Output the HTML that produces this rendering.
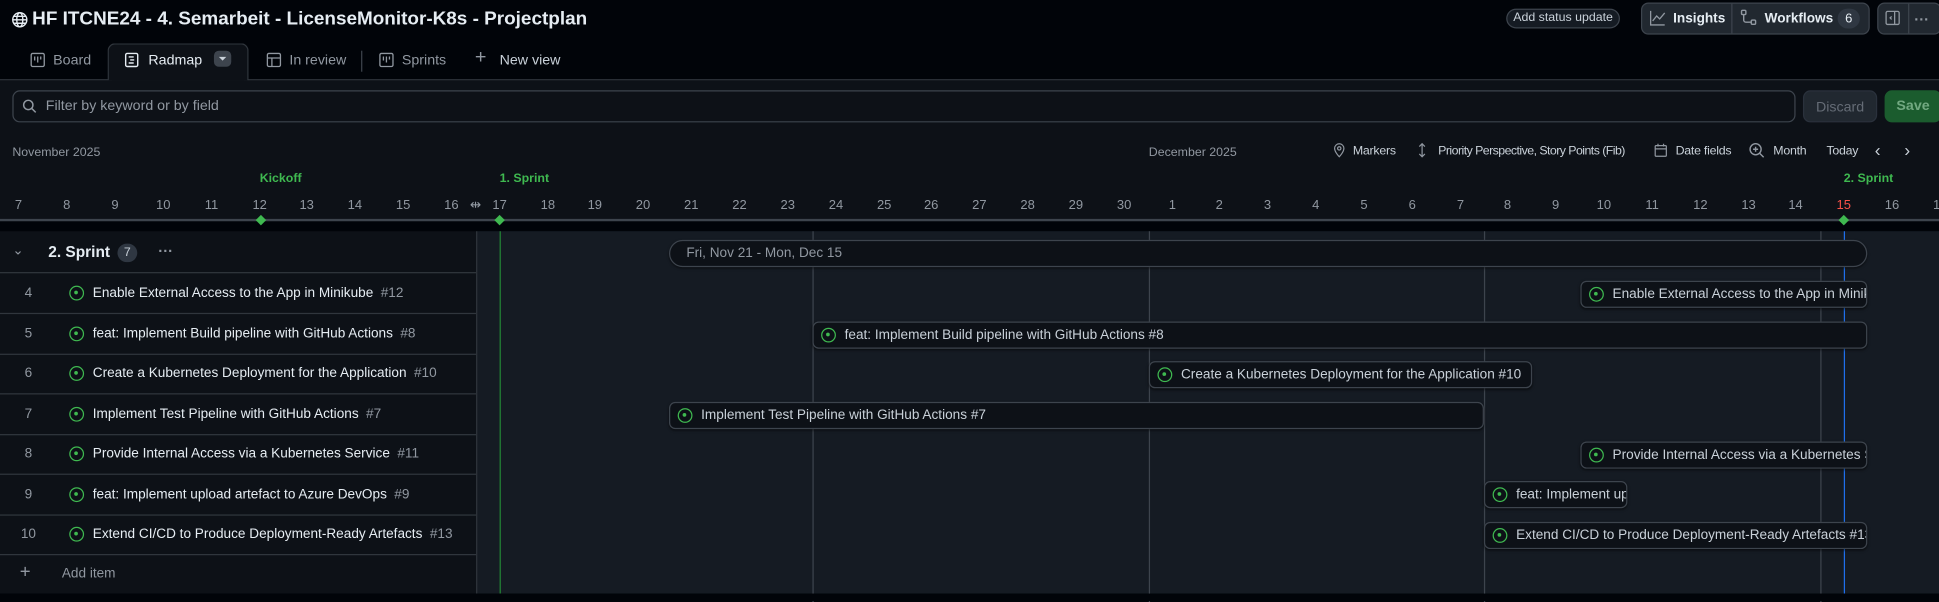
<!DOCTYPE html>
<html><head><meta charset="utf-8"><style>
*{box-sizing:border-box;margin:0;padding:0}
html,body{width:1939px;height:600px;overflow:hidden;background:#010409}
#w{position:absolute;left:0;top:0;width:1568px;height:485.2px;transform:scale(1.23661);transform-origin:0 0;font-family:"Liberation Sans",sans-serif;color:#e6edf3;font-size:11px;background:#010409}
.a{position:absolute;white-space:nowrap}
.mut{color:#9198a1}
.day{position:absolute;top:160px;width:30px;margin-left:-15px;text-align:center;color:#9198a1;font-size:10.5px}
.row{position:absolute;left:0;width:385px;height:32.5px;border-bottom:1px solid #30363d}
.row .n{position:absolute;left:0;width:46px;text-align:center;top:10px;color:#9198a1}
.row .t{position:absolute;left:75px;top:10px}
.row .t i{font-style:normal;color:#9198a1;margin-left:6px}
.ic{position:absolute;width:12px;height:12px;border:1.5px solid #3fb950;border-radius:50%}
.ic:after{content:"";position:absolute;left:3px;top:3px;width:3px;height:3px;background:#3fb950;border-radius:50%}
.bar{position:absolute;height:22px;background:#0d1117;border:1px solid #3d444d;border-radius:5px;overflow:hidden;color:#c9d1d9;box-shadow:0 1px 2px #0008}
.bar .ic{left:6px;top:4px}
.bar span{position:absolute;left:25px;top:4px;white-space:nowrap}
.vl{position:absolute;top:180px;width:1px;height:300px;background:#3d444d}
.btn{position:absolute;border:1px solid #3d444d;border-radius:6px;background:#212830}
.tb{font-size:10px;color:#c9d1d9;letter-spacing:-0.2px}
</style></head><body><div id="w">
<svg class="a" style="left:9px;top:9px" width="14" height="14" viewBox="0 0 16 16" fill="none" stroke="#e6edf3" stroke-width="1.3"><circle cx="8" cy="8" r="6.5"/><ellipse cx="8" cy="8" rx="2.8" ry="6.5"/><path d="M1.5 8h13M2.5 4.8h11M2.5 11.2h11"/></svg>
<div class="a" style="left:26px;top:7px;font-size:15.3px;font-weight:bold">HF ITCNE24 - 4. Semarbeit - LicenseMonitor-K8s - Projectplan</div>
<div class="a" style="left:1218px;top:7px;width:92px;height:16px;border:1px solid #3d444d;border-radius:9px;background:#151b23;font-size:10px;text-align:center;line-height:14px;color:#c9d1d9">Add status update</div>
<div class="btn" style="left:1327px;top:2px;width:185px;height:26px"></div>
<div class="a" style="left:1400px;top:3px;width:1px;height:24px;background:#3d444d"></div>
<svg class="a" style="left:1334px;top:8px" width="13" height="13" viewBox="0 0 16 16" fill="none" stroke="#9198a1" stroke-width="1.3"><path d="M1 1v14h14M3 11l4-5 3 3 5-6"/></svg>
<div class="a" style="left:1353px;top:9px;font-weight:bold;font-size:11px">Insights</div>
<svg class="a" style="left:1407px;top:7px" width="14" height="14" viewBox="0 0 16 16" fill="none" stroke="#9198a1" stroke-width="1.3"><rect x="1.5" y="1.5" width="4" height="4" rx="1"/><rect x="10.5" y="10.5" width="4" height="4" rx="1"/><path d="M3.5 5.5v5a2 2 0 0 0 2 2h5"/></svg>
<div class="a" style="left:1427px;top:9px;font-weight:bold;font-size:11px">Workflows</div>
<div class="a" style="left:1486px;top:7px;width:18px;height:16px;border-radius:8px;background:#2f3742;text-align:center;line-height:16px;font-size:10.5px">6</div>
<div class="btn" style="left:1518px;top:2px;width:52px;height:26px"></div>
<div class="a" style="left:1543px;top:3px;width:1px;height:24px;background:#3d444d"></div>
<svg class="a" style="left:1524px;top:8px" width="13" height="13" viewBox="0 0 16 16" fill="none" stroke="#9198a1" stroke-width="1.3"><rect x="1.5" y="1.5" width="13" height="13" rx="1.5"/><path d="M10 1.5v13M7 6.5l-1.5 1.5 1.5 1.5"/></svg>
<div class="a mut" style="left:1548px;top:9px;font-size:12px;font-weight:bold">···</div>
<div class="a" style="left:0;top:64px;width:1568px;height:1px;background:#30363d"></div>
<div class="a" style="left:87px;top:35px;width:114px;height:30px;border:1px solid #30363d;border-bottom:none;border-radius:6px 6px 0 0;background:#0d1117"></div>
<svg class="a" style="left:24px;top:42px" width="13" height="13" viewBox="0 0 16 16" fill="none" stroke="#9198a1" stroke-width="1.3"><rect x="1.5" y="1.5" width="13" height="13" rx="1.5"/><path d="M5 4.5v4M8 4.5v6M11 4.5v3"/></svg>
<div class="a mut" style="left:43px;top:43px;font-size:11.5px">Board</div>
<svg class="a" style="left:100px;top:42px" width="13" height="13" viewBox="0 0 16 16" fill="none" stroke="#e6edf3" stroke-width="1.4"><rect x="2" y="1.5" width="12" height="13" rx="1.5"/><path d="M5 5h5M6.5 8h4M5 11h5"/></svg>
<div class="a" style="left:120px;top:43px;font-size:11.5px">Radmap</div>
<div class="a" style="left:173px;top:41px;width:14px;height:13px;border-radius:4px;background:#3d444d"></div>
<div class="a" style="left:177px;top:46px;border:3px solid transparent;border-top:3px solid #c9d1d9"></div>
<svg class="a" style="left:215px;top:42px" width="13" height="13" viewBox="0 0 16 16" fill="none" stroke="#9198a1" stroke-width="1.3"><rect x="1.5" y="1.5" width="13" height="13" rx="1.5"/><path d="M1.5 6h13M6 6v8.5"/></svg>
<div class="a mut" style="left:234px;top:43px;font-size:11.5px">In review</div>
<div class="a" style="left:292px;top:41px;width:1px;height:17px;background:#3d444d"></div>
<svg class="a" style="left:306px;top:42px" width="13" height="13" viewBox="0 0 16 16" fill="none" stroke="#9198a1" stroke-width="1.3"><rect x="1.5" y="1.5" width="13" height="13" rx="1.5"/><path d="M5 4.5v4M8 4.5v6M11 4.5v3"/></svg>
<div class="a mut" style="left:325px;top:43px;font-size:11.5px">Sprints</div>
<div class="a mut" style="left:384px;top:38px;font-size:16px">+</div>
<div class="a" style="left:404px;top:43px;font-size:11.5px;color:#c9d1d9">New view</div>
<div class="a" style="left:0;top:65px;width:1568px;height:415px;background:#0d1117"></div>
<div class="a" style="left:10px;top:73px;width:1442px;height:26px;border:1px solid #3d444d;border-radius:6px;background:#0d1117"></div>
<svg class="a" style="left:18px;top:80px" width="12" height="12" viewBox="0 0 16 16" fill="none" stroke="#9198a1" stroke-width="1.6"><circle cx="6.5" cy="6.5" r="5"/><path d="M10.5 10.5l4 4"/></svg>
<div class="a mut" style="left:37px;top:80px;font-size:11.5px">Filter by keyword or by field</div>
<div class="a" style="left:1458px;top:73px;width:60px;height:26px;border-radius:6px;background:#212830;color:#656c76;text-align:center;line-height:26px;font-size:11.5px;border:1px solid #2a313c">Discard</div>
<div class="a" style="left:1524px;top:73px;width:46px;height:26px;border-radius:6px;background:#1f6f34;color:#8ccf9c;text-align:center;line-height:26px;font-size:11.5px;font-weight:bold;opacity:.8">Save</div>
<div class="a mut" style="left:10px;top:118px;font-size:10px">November 2025</div>
<div class="a mut" style="left:929px;top:118px;font-size:10px">December 2025</div>
<svg class="a" style="left:1077px;top:115px" width="12" height="13" viewBox="0 0 16 16" fill="none" stroke="#9198a1" stroke-width="1.3"><path d="M8 15s5-5 5-9a5 5 0 0 0-10 0c0 4 5 9 5 9z"/><circle cx="8" cy="6" r="1.8"/></svg>
<div class="a tb" style="left:1094px;top:117px">Markers</div>
<svg class="a" style="left:1144px;top:115px" width="12" height="13" viewBox="0 0 16 16" fill="none" stroke="#9198a1" stroke-width="1.3"><path d="M8 1v14M5 4l3-3 3 3M5 12l3 3 3-3"/></svg>
<div class="a tb" style="left:1163px;top:117px;letter-spacing:-0.45px">Priority Perspective, Story Points (Fib)</div>
<svg class="a" style="left:1337px;top:115px" width="12" height="13" viewBox="0 0 16 16" fill="none" stroke="#9198a1" stroke-width="1.3"><rect x="2" y="3" width="12" height="11.5" rx="1"/><path d="M2 6.5h12M5 1v3M11 1v3"/></svg>
<div class="a tb" style="left:1355px;top:117px">Date fields</div>
<svg class="a" style="left:1414px;top:115px" width="13" height="13" viewBox="0 0 16 16" fill="none" stroke="#9198a1" stroke-width="1.4"><circle cx="7" cy="7" r="5.5"/><path d="M11 11l4 4M7 4.5v5M4.5 7h5"/></svg>
<div class="a tb" style="left:1434px;top:117px">Month</div>
<div class="a tb" style="left:1477px;top:117px">Today</div>
<div class="a" style="left:1516px;top:113px;font-size:14px;color:#c9d1d9">‹</div>
<div class="a" style="left:1540px;top:113px;font-size:14px;color:#c9d1d9">›</div>
<div class="a" style="left:210px;top:139px;font-size:10px;color:#3fb950;font-weight:bold">Kickoff</div>
<div class="a" style="left:404px;top:139px;font-size:10px;color:#3fb950;font-weight:bold">1. Sprint</div>
<div class="a" style="left:1491px;top:139px;font-size:10px;color:#3fb950;font-weight:bold">2. Sprint</div>
<div class="day" style="left:15px">7</div><div class="day" style="left:54px">8</div><div class="day" style="left:93px">9</div><div class="day" style="left:132px">10</div><div class="day" style="left:171px">11</div><div class="day" style="left:210px">12</div><div class="day" style="left:248px">13</div><div class="day" style="left:287px">14</div><div class="day" style="left:326px">15</div><div class="day" style="left:365px">16</div><div class="day" style="left:404px">17</div><div class="day" style="left:443px">18</div><div class="day" style="left:481px">19</div><div class="day" style="left:520px">20</div><div class="day" style="left:559px">21</div><div class="day" style="left:598px">22</div><div class="day" style="left:637px">23</div><div class="day" style="left:676px">24</div><div class="day" style="left:715px">25</div><div class="day" style="left:753px">26</div><div class="day" style="left:792px">27</div><div class="day" style="left:831px">28</div><div class="day" style="left:870px">29</div><div class="day" style="left:909px">30</div><div class="day" style="left:948px">1</div><div class="day" style="left:986px">2</div><div class="day" style="left:1025px">3</div><div class="day" style="left:1064px">4</div><div class="day" style="left:1103px">5</div><div class="day" style="left:1142px">6</div><div class="day" style="left:1181px">7</div><div class="day" style="left:1219px">8</div><div class="day" style="left:1258px">9</div><div class="day" style="left:1297px">10</div><div class="day" style="left:1336px">11</div><div class="day" style="left:1375px">12</div><div class="day" style="left:1414px">13</div><div class="day" style="left:1452px">14</div><div class="day" style="left:1491px;color:#f85149">15</div><div class="day" style="left:1530px">16</div><div class="day" style="left:1569px">17</div>
<div class="a mut" style="left:380px;top:159px;font-size:11px">⇹</div>
<div class="a" style="left:0;top:177px;width:1568px;height:2px;background:#3d444d"></div>
<div class="a" style="left:0;top:179px;width:1568px;height:8px;background:#010409"></div>
<div class="a" style="left:208px;top:175px;width:6px;height:6px;background:#3fb950;transform:rotate(45deg)"></div>
<div class="a" style="left:401px;top:175px;width:6px;height:6px;background:#3fb950;transform:rotate(45deg)"></div>
<div class="a" style="left:1488px;top:175px;width:6px;height:6px;background:#3fb950;transform:rotate(45deg)"></div>
<div class="a" style="left:386px;top:187px;width:1182px;height:293px;background:#151b23"></div>
<div class="a" style="left:385px;top:187px;width:1px;height:293px;background:#30363d"></div>
<div class="vl" style="left:657px;top:187px"></div><div class="vl" style="left:929px;top:187px"></div><div class="vl" style="left:1200px;top:187px"></div><div class="vl" style="left:1472px;top:187px"></div>
<div class="a" style="left:404px;top:187px;width:1px;height:293px;background:#238636"></div>
<div class="a" style="left:1491px;top:187px;width:1px;height:293px;background:#1f6feb"></div>
<div class="a" style="left:0;top:480px;width:1568px;height:6px;background:#010409"></div>
<div class="row" style="top:188px;height:33px"><div class="a mut" style="left:10px;top:8px;font-size:11px">⌄</div><div class="a" style="left:39px;top:9px;font-size:12.5px;font-weight:bold">2. Sprint</div><div class="a" style="left:95px;top:9px;width:16px;height:15px;border-radius:8px;background:#2f3742;text-align:center;line-height:15px;font-size:10px;color:#c9d1d9">7</div><div class="a mut" style="left:128px;top:8px;font-size:12px;font-weight:bold">···</div></div>
<div class="row" style="top:221px"><div class="n">4</div><div class="ic" style="left:56px;top:10px"></div><div class="t">Enable External Access to the App in Minikube<i>#12</i></div></div>
<div class="row" style="top:254px"><div class="n">5</div><div class="ic" style="left:56px;top:10px"></div><div class="t">feat: Implement Build pipeline with GitHub Actions<i>#8</i></div></div>
<div class="row" style="top:286px"><div class="n">6</div><div class="ic" style="left:56px;top:10px"></div><div class="t">Create a Kubernetes Deployment for the Application<i>#10</i></div></div>
<div class="row" style="top:319px"><div class="n">7</div><div class="ic" style="left:56px;top:10px"></div><div class="t">Implement Test Pipeline with GitHub Actions<i>#7</i></div></div>
<div class="row" style="top:351px"><div class="n">8</div><div class="ic" style="left:56px;top:10px"></div><div class="t">Provide Internal Access via a Kubernetes Service<i>#11</i></div></div>
<div class="row" style="top:384px"><div class="n">9</div><div class="ic" style="left:56px;top:10px"></div><div class="t">feat: Implement upload artefact to Azure DevOps<i>#9</i></div></div>
<div class="row" style="top:416px"><div class="n">10</div><div class="ic" style="left:56px;top:10px"></div><div class="t">Extend CI/CD to Produce Deployment-Ready Artefacts<i>#13</i></div></div>
<div class="row" style="top:448px;border-bottom:none"><div class="a mut" style="left:16px;top:6px;font-size:15px">+</div><div class="a mut" style="left:50px;top:10px">Add item</div></div>
<div class="bar" style="left:541px;top:194px;width:969px;border-radius:11px;border-color:#3d444d"><span style="left:13px;color:#9198a1">Fri, Nov 21 - Mon, Dec 15</span></div>
<div class="bar" style="left:1278px;top:227px;width:232px"><div class="ic"></div><span>Enable External Access to the App in Minikube</span></div>
<div class="bar" style="left:657px;top:260px;width:853px"><div class="ic"></div><span>feat: Implement Build pipeline with GitHub Actions #8</span></div>
<div class="bar" style="left:929px;top:292px;width:310px"><div class="ic"></div><span>Create a Kubernetes Deployment for the Application #10</span></div>
<div class="bar" style="left:541px;top:325px;width:659px"><div class="ic"></div><span>Implement Test Pipeline with GitHub Actions #7</span></div>
<div class="bar" style="left:1278px;top:357px;width:232px"><div class="ic"></div><span>Provide Internal Access via a Kubernetes Service</span></div>
<div class="bar" style="left:1200px;top:389px;width:116px"><div class="ic"></div><span>feat: Implement upload artefact</span></div>
<div class="bar" style="left:1200px;top:422px;width:310px"><div class="ic"></div><span>Extend CI/CD to Produce Deployment-Ready Artefacts #13</span></div>
</div></body></html>
